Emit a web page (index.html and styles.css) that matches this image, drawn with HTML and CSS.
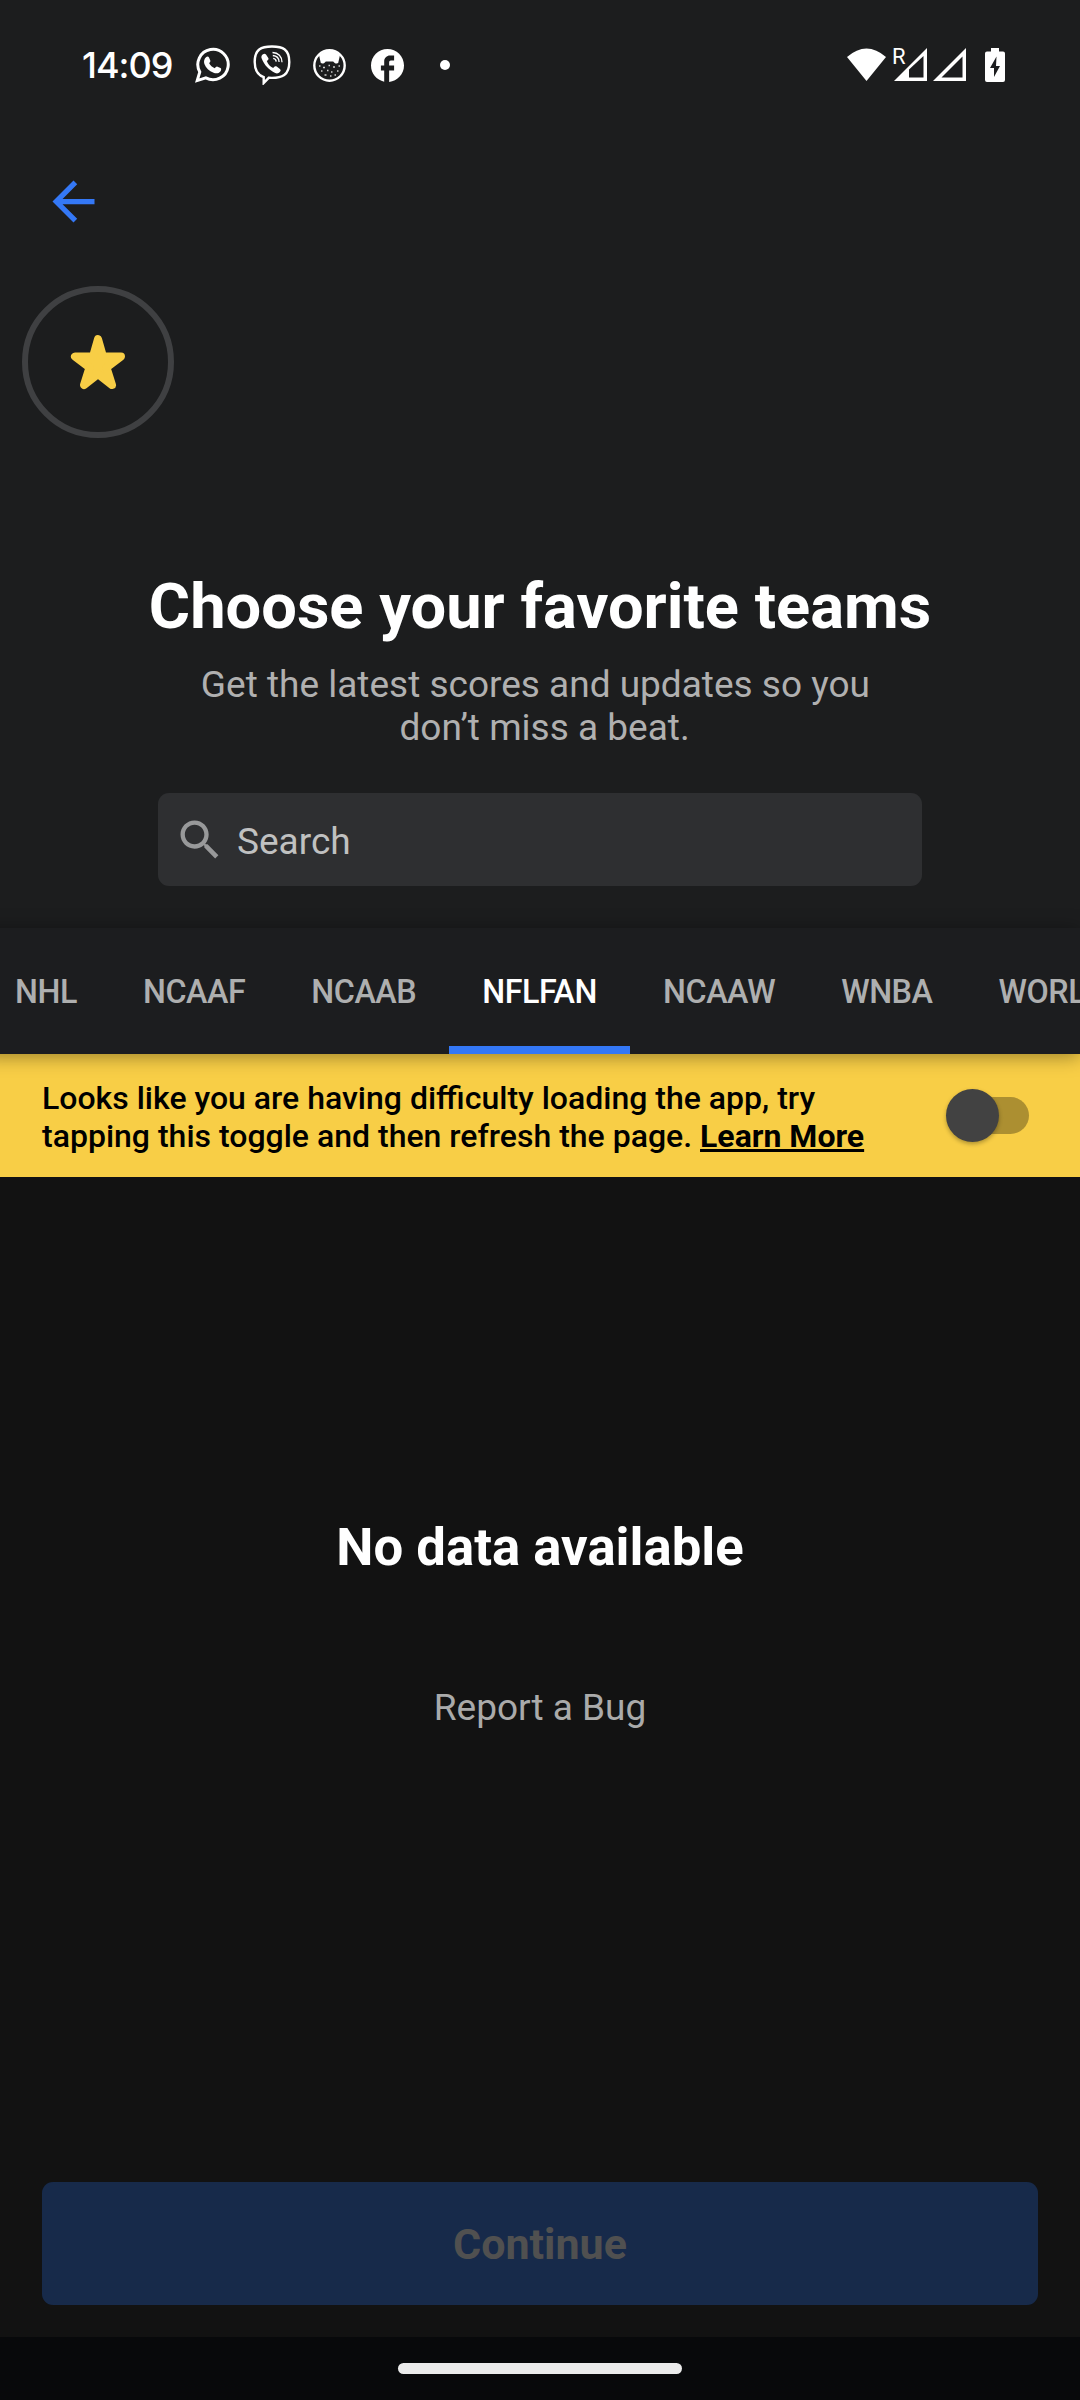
FILE: index.html
```html
<!DOCTYPE html>
<html lang="en">
<head>
<meta charset="utf-8">
<title>Choose your favorite teams</title>
<link rel="stylesheet" href="styles.css">
</head>
<body>
<div class="screen">
  <header class="header">
    <div class="status">
      <span class="clock">14:09</span>
      <div class="notifications">
        <svg width="36" height="36" viewBox="0 0 36 36"><path d="M2.200 33.600l2.600-8.600A15.200 15.200 0 1 1 10.800 30.900z" fill="none" stroke="#fff" stroke-width="3"/><path d="M11 10.200c1-1.100 2.500-.9 3 .2l1.300 3c.3.900-.2 1.500-1.200 2.700 1.200 2.400 3.200 4.200 5.700 5.200 1.100-1.300 1.700-2.100 2.700-1.600l3 1.400c1 .6.8 2.200-.1 3.300-1.600 1.900-4.200 2.300-6.800 1.300-4.500-1.700-7.800-5-9.200-8.800-.9-2.600-.1-5.100 1.600-6.700z" fill="#fff"/></svg>
        <svg width="38" height="40" viewBox="0 0 38 40"><path d="M19 1.500c-11 0-17.300 3-17.300 15.500 0 8.500 2.800 13 9 15.200V38l5-5.200c14 .8 20.600-3 20.600-15.800C36.300 4.500 30 1.500 19 1.500z" fill="none" stroke="#fff" stroke-width="2.400"/><path d="M10 9.200c1.200-.9 2.200-.6 3 .4l2.300 3.300c.6 1.100.1 1.900-1.500 3.100 1.200 3.300 3.200 5.500 6.400 6.900 1.300-1.700 2.300-2 3.500-1.300l3.200 2.300c1 .9 1 1.800.1 2.900-1.500 1.700-3 2.100-4.800 1.200C15.800 25 11.300 20.300 8.600 13.300c-.6-1.600 0-3.100 1.400-4.100z" fill="#fff"/><path d="M19.500 7.500c5.700.2 9.500 4 9.500 9.800M19.800 10.500c4 .3 6.200 2.600 6.300 6.600M20.200 13.300c1.900.2 2.900 1.300 3 3.300" fill="none" stroke="#fff" stroke-width="1.300"/></svg>
        <svg width="33" height="33" viewBox="0 0 33 33"><circle cx="16.500" cy="16.500" r="15.200" fill="none" stroke="#fff" stroke-width="2.400"/><path d="M6 6Q16.500-3 27 6l-1.800 8c-1.700.9-3.800.3-5-1.600h-7.400c-1.200 1.900-3.300 2.500-5 1.600z" fill="#fff"/><path d="M6 17h1.500M10 18.500h2M15.500 16.500h1.500M20 18h2M25.500 17H27M8 22h1.500M14 21.500h1.500M18 23h1.500M24 22h1.500M11.500 26h2M17 27h1.500M21.500 26H23" stroke="#ccc" stroke-width="1.300"/></svg>
        <svg class="facebook" width="33" height="33" viewBox="2 2 20 20"><path fill="#fff" d="M22 12c0-5.520-4.480-10-10-10S2 6.480 2 12c0 4.840 3.440 8.870 8 9.800V15H8v-3h2V9.500C10 7.570 11.570 6 13.500 6H16v3h-2c-.55 0-1 .45-1 1v2h3v3h-3v6.950c5.050-.5 9-4.760 9-9.950z"/></svg>
        <i class="more-dot"></i>
      </div>
      <div class="system">
        <svg class="radio" width="120" height="34" viewBox="0 0 120 34"><path d="M0 9Q19.500-8 39 9L19.500 33z" fill="#fff"/><path d="M47 33L80 0v33z" fill="#fff"/><path d="M62 21.500L76.500 8v21.500H62z" fill="#1c1d1f"/><path d="M86 33L119 0v33z" fill="#fff"/><path d="M94.500 29.500L115.500 8.500v21z" fill="#1c1d1f"/><text x="45" y="16.300" class="roaming">R</text></svg>
        <svg class="battery" width="20" height="34" viewBox="0 0 20 34"><path d="M6 0h8v3.500h4a2 2 0 0 1 2 2V32a2 2 0 0 1-2 2H2a2 2 0 0 1-2-2V5.500a2 2 0 0 1 2-2h4z" fill="#fff"/><path d="M11.500 8.500L5 20h4v9l6-11h-4z" fill="#1c1d1f"/></svg>
      </div>
    </div>
    <svg class="back" viewBox="0 0 24 24"><path fill="#3478f6" d="M20 11H7.830l5.590-5.590L12 4l-8 8 8 8 1.410-1.410L7.830 13H20v-2z"/></svg>
    <div class="favorite">
      <svg width="56" height="56" viewBox="70 334 56 56"><path d="M98 339l5 17.500h18L106.500 367.500 112 385 98 374 84 385l5.500-17.500L75 356.500h18z" fill="#f8ce46" stroke="#f8ce46" stroke-width="8" stroke-linejoin="round"/></svg>
    </div>
    <h1 class="title">Choose your favorite teams</h1>
    <p class="subtitle">Get the latest scores and updates so you&nbsp;<br>&nbsp;don’t miss a beat.</p>
    <div class="search">
      <svg width="52" height="52" viewBox="0 0 24 24"><path fill="#98999a" d="M15.500 14h-.79l-.28-.27C15.410 12.590 16 11.110 16 9.500 16 5.910 13.090 3 9.500 3S3 5.910 3 9.500 5.910 16 9.500 16c1.610 0 3.090-.59 4.230-1.570l.27.28v.79l5 4.990L20.490 19l-4.990-5zm-6 0C7.010 14 5 11.990 5 9.500S7.010 5 9.500 5 14 7.010 14 9.500 11.990 14 9.500 14z"/></svg>
      <span class="placeholder">Search</span>
    </div>
  </header>
  <nav class="tabs">
    <span class="tab">NHL</span><span class="tab">NCAAF</span><span class="tab">NCAAB</span><span class="tab active">NFLFAN</span><span class="tab">NCAAW</span><span class="tab">WNBA</span><span class="tab">WORLD CUP</span>
  </nav>
  <section class="banner">
    <p>Looks like you are having difficulty loading the app, try<br>tapping this toggle and then refresh the page. <b>Learn More</b></p>
    <div class="toggle"><i class="thumb"></i><i class="track"></i></div>
  </section>
  <main class="empty">
    <h2>No data available</h2>
    <span class="report">Report a Bug</span>
  </main>
  <footer class="footer"><button class="continue">Continue</button></footer>
  <div class="gesture"><i class="pill"></i></div>
</div>
</body>
</html>
```
FILE: styles.css
```css
* { box-sizing: border-box; }
body { margin: 0; background: #121212; font-family: Roboto, sans-serif; }
svg { display: block; flex: none; }
.screen { width: 1080px; height: 2400px; display: flex; flex-direction: column; overflow: hidden; }
.header { height: 928px; flex: none; background: #1c1d1e; display: flex; flex-direction: column; }
.status { height: 130px; display: flex; align-items: center; padding: 0 75px 0 82px; }
.clock { width: 113px; font: 500 36px/36px Inter, sans-serif; letter-spacing: -1px; color: #fff; }
.notifications { display: flex; align-items: center; gap: 22px; }
.facebook { margin-left: 3px; }
.more-dot { width: 10px; height: 10px; border-radius: 50%; background: #fff; margin-left: 14px; }
.system { display: flex; align-items: center; gap: 18px; margin-left: auto; }
.radio { overflow: visible; }
.roaming { font: 22px Roboto, sans-serif; fill: #fff; }
.back { width: 63px; height: 63px; margin: 40px 0 0 42px; }
.favorite { width: 152px; height: 152px; margin: 53px 0 0 22px; border: 6px solid #3f4042; border-radius: 50%; display: flex; align-items: center; justify-content: center; }
.title { margin: 131px 0 0; text-align: center; color: #fff; font-size: 63.200px; line-height: 74px; font-weight: 700; }
.subtitle { margin: 20px 0 0; text-align: center; color: #b0b0b0; font-size: 37px; line-height: 43px; }
.search { width: 764px; height: 93px; margin: 44px 0 0 158px; padding-left: 16px; display: flex; align-items: center; gap: 11px; border-radius: 11px; background: #2e2f31; color: #c0c1c1; font-size: 37px; }
.placeholder { padding-top: 3px; }
.tabs { height: 126px; flex: none; display: flex; margin-left: -18px; background: #1c1d1f; color: #aeafaf; position: relative; box-shadow: 0 2px 18px rgba(0, 0, 0, .4); }
.tab { flex: none; padding: 1px 33px 0; font-size: 32.300px; line-height: 126px; font-weight: 500; letter-spacing: -.45px; }
.tab.active { color: #fff; border-bottom: 8px solid #3478f6; }
.banner { height: 123px; flex: none; display: flex; align-items: center; justify-content: space-between; padding: 0 51px 0 42px; background: #f8ce46; color: #000; }
.banner p { margin: 0; padding-top: 3px; font-size: 32px; line-height: 38px; font-weight: 500; white-space: nowrap; }
.banner b { text-decoration: underline; font-weight: 700; }
.toggle { display: flex; align-items: center; }
.thumb { width: 53px; height: 53px; border-radius: 50%; background: #424242; position: relative; box-shadow: 0 2px 4px rgba(0, 0, 0, .3); }
.track { width: 73px; height: 37px; margin-left: -43px; border-radius: 19px; background: #ac8f31; }
.empty { flex: 1; display: flex; flex-direction: column; align-items: center; }
.empty h2 { margin: 339px 0 0; font-size: 52.700px; line-height: 62px; color: #fff; }
.report { margin-top: 108px; font-size: 37px; line-height: 44px; color: #aaa; }
.footer { height: 155px; flex: none; padding: 0 42px; }
.continue { width: 100%; height: 123px; border: 0; border-radius: 11px; background: #172a4a; color: #505050; font: 700 43px/48px Roboto, sans-serif; }
.gesture { height: 63px; flex: none; display: flex; align-items: center; justify-content: center; background: #08090b; }
.pill { width: 284px; height: 11px; border-radius: 6px; background: #ebebeb; }
```
